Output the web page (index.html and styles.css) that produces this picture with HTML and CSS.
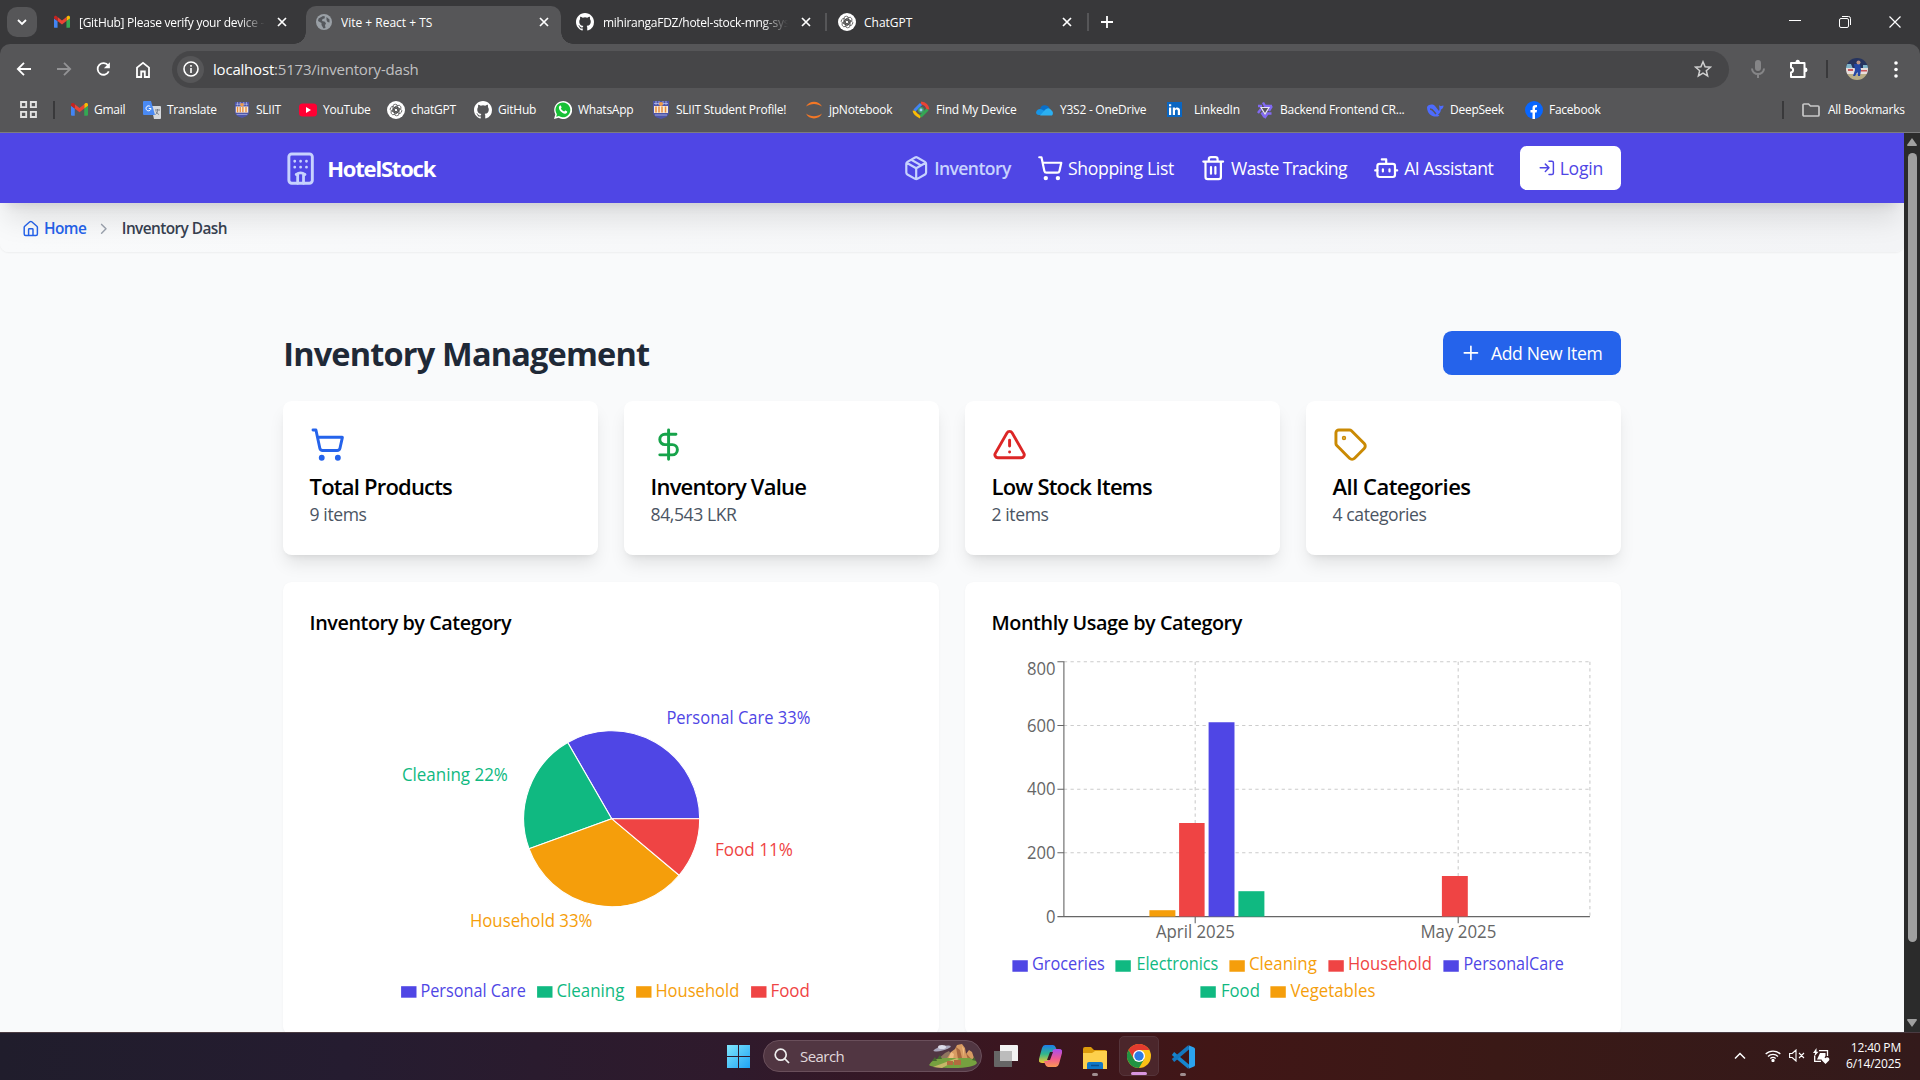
FILE: index.html
```html
<!DOCTYPE html>
<html lang="en">
<head>
<meta charset="utf-8">
<title>Vite + React + TS</title>
<link rel="stylesheet" href="styles.css">
</head>
<body>
<svg class="defs" width="0" height="0">
  <symbol id="gmail" viewBox="0 0 18 18"><path fill="#4285f4" d="M1 15.500h3V8L0 5v9.500a1 1 0 0 0 1 1z"/><path fill="#34a853" d="M14 15.500h3a1 1 0 0 0 1-1V5l-4 3z"/><path fill="#fbbc04" d="M14 3.500V8l4-3V4c0-2-1.700-2.500-3-1.500z"/><path fill="#ea4335" d="M4 8V3.500l5 3.800 5-3.800V8l-5 3.800z"/><path fill="#c5221f" d="M0 4v1l4 3V3.500L3 2.500C1.700 1.500 0 2 0 4z"/></symbol>
  <symbol id="github" viewBox="0 0 16 16"><path fill="#fff" d="M8 0C3.580 0 0 3.580 0 8c0 3.540 2.290 6.530 5.470 7.590.4.070.550-.170.550-.380 0-.190-.010-.820-.010-1.490-2.010.370-2.530-.490-2.690-.940-.090-.230-.480-.940-.820-1.130-.280-.150-.680-.520-.010-.530.630-.010 1.080.580 1.230.820.720 1.210 1.870.870 2.330.660.070-.520.280-.870.510-1.070-1.780-.2-3.640-.890-3.640-3.950 0-.870.310-1.590.820-2.150-.080-.2-.360-1.020.080-2.120 0 0 .670-.210 2.200.820a7.600 7.600 0 0 1 4 0c1.530-1.040 2.200-.820 2.200-.820.440 1.100.160 1.920.080 2.120.510.560.820 1.270.820 2.150 0 3.070-1.870 3.750-3.650 3.950.290.250.540.730.540 1.480 0 1.070-.010 1.930-.010 2.200 0 .210.150.460.550.380A8 8 0 0 0 16 8c0-4.420-3.580-8-8-8z"/></symbol>
  <symbol id="gpt" viewBox="0 0 18 18"><circle cx="9" cy="9" r="9" fill="#fff"/><g fill="none" stroke="#444" stroke-width=".7"><rect x="6" y="3.200" width="4.500" height="8.500" rx="2.200"/><rect x="6" y="3.200" width="4.500" height="8.500" rx="2.200" transform="rotate(60 9 9)"/><rect x="6" y="3.200" width="4.500" height="8.500" rx="2.200" transform="rotate(120 9 9)"/><rect x="6" y="3.200" width="4.500" height="8.500" rx="2.200" transform="rotate(180 9 9)"/><rect x="6" y="3.200" width="4.500" height="8.500" rx="2.200" transform="rotate(240 9 9)"/><rect x="6" y="3.200" width="4.500" height="8.500" rx="2.200" transform="rotate(300 9 9)"/></g></symbol>
  <symbol id="close" viewBox="0 0 10 10"><path d="M1 1l8 8M9 1L1 9" fill="none" stroke="#fff" stroke-width="1.700"/></symbol>
  <symbol id="sliit" viewBox="0 0 18 18"><path fill="#4d55a8" d="M1 0h16v11c0 4-4 6-8 7-4-1-8-3-8-7z"/><path fill="#f5ead8" d="M2 5h14v7H2z"/><path stroke="#e98b3a" stroke-width="1.500" d="M4 5.500v6M7 5.500v6M10 5.500v6M13.500 5.500v6"/><path stroke="#c3c8f0" stroke-width=".7" fill="none" d="M2 2.500h14M4 0v4M7 0v4M11 0v4M14 0v4M3 14h12"/><circle cx="9" cy="3" r="2" fill="#ef9a4a"/></symbol>
  <symbol id="cart" viewBox="0 0 24 24"><circle cx="8" cy="21" r="1"/><circle cx="19" cy="21" r="1"/><path d="M2.050 2.050h2l2.660 12.420a2 2 0 0 0 2 1.580h9.780a2 2 0 0 0 1.950-1.570l1.650-7.430H5.120"/></symbol>
</svg>

<div class="screen">
  <header class="browser">
    <div class="tabstrip">
      <button class="tab-search"><svg width="10" height="7" viewBox="0 0 10 7"><path d="M1 1l4 4 4-4" fill="none" stroke="#fff" stroke-width="1.800"/></svg></button>
      <div class="tab tab-first"><svg class="fav" width="16" height="16"><use href="#gmail"/></svg><span class="tab-title tight fade">[GitHub] Please verify your device -</span><svg class="x" width="10" height="10"><use href="#close"/></svg></div>
      <div class="tab tab-active"><svg class="fav" width="16" height="16" viewBox="0 0 16 16"><circle cx="8" cy="8" r="8" fill="#9aa0a6"/><path fill="#55585d" d="M2.500 4.500L7 2l2 .5-.5 2-2 .5-.5 2 3 .8 1 2-1 1.200.5 3-2 .5-2-3.500V9L2 7zM10.500 3l3 2.500v3l-2-.5-1-2z"/></svg><span class="tab-title">Vite + React + TS</span><svg class="x" width="10" height="10"><use href="#close"/></svg></div>
      <div class="tab tab-repo"><svg class="fav" width="18" height="18"><use href="#github"/></svg><span class="tab-title tight fade">mihirangaFDZ/hotel-stock-mng-sys</span><svg class="x" width="10" height="10"><use href="#close"/></svg></div>
      <div class="tab tab-gpt"><svg class="fav" width="18" height="18"><use href="#gpt"/></svg><span class="tab-title">ChatGPT</span><svg class="x" width="10" height="10"><use href="#close"/></svg></div>
      <svg class="plus" width="12" height="12" viewBox="0 0 12 12"><path d="M6 0v12M0 6h12" stroke="#fff" stroke-width="1.800"/></svg>
      <div class="window-buttons">
        <svg width="12" height="12" viewBox="0 0 12 12"><path d="M0 4.500h12" stroke="#fff"/></svg>
        <svg width="12" height="12" viewBox="0 0 12 12" fill="none" stroke="#fff"><rect x=".5" y="2.500" width="9" height="9" rx="1.500"/><path d="M3 .5h6.500a2 2 0 0 1 2 2V9"/></svg>
        <svg width="12" height="12" viewBox="0 0 12 12"><path d="M.5.5l11 11M11.500.5l-11 11" stroke="#fff" stroke-width="1.200"/></svg>
      </div>
    </div>

    <div class="toolbar">
      <div class="nav-buttons">
        <svg width="16" height="16" viewBox="0 0 16 16" fill="none" stroke="#fff" stroke-width="1.800"><path d="M15 8H2.500M8 1.800L1.800 8 8 14.200"/></svg>
        <svg width="16" height="16" viewBox="0 0 16 16" fill="none" stroke="#939395" stroke-width="1.800"><path d="M1 8h12.500M8 1.800L14.200 8 8 14.200"/></svg>
        <svg width="15" height="16" viewBox="0 0 16 16" fill="none" stroke="#fff" stroke-width="1.900"><path d="M13.600 10.500A6.200 6.200 0 1 1 13 4.300"/><path fill="#fff" stroke="none" d="M14.800.8v6.400H8.400z"/></svg>
        <svg width="16" height="17" viewBox="0 0 16 17" fill="none" stroke="#fff" stroke-width="1.800"><path d="M2 6.600L8 1.800l6 4.800V16H9.800v-5.500H6.200V16H2z"/></svg>
      </div>
      <div class="omnibox">
        <span class="site-info"><svg width="16" height="16" viewBox="0 0 16 16" fill="none" stroke="#fff" stroke-width="1.600"><circle cx="8" cy="8" r="7"/><path d="M8 7v5M8 4v1.700"/></svg></span>
        <span class="url"><b>localhost</b>:5173/inventory-dash</span>
        <svg class="star" width="18" height="18" viewBox="0 0 18 18"><path d="M9 1.800l2.100 5 5.300.4-4.100 3.500 1.300 5.200L9 13.100l-4.600 2.800 1.300-5.200-4.100-3.500 5.300-.4z" fill="none" stroke="#d0d0d0" stroke-width="1.500"/></svg>
      </div>
      <svg class="mic" width="16" height="18" viewBox="0 0 16 18" fill="none" stroke="#858587" stroke-width="2"><rect x="6" y="1" width="4" height="9" rx="2" fill="#858587"/><path d="M2 8.500a6 5.500 0 0 0 12 0M8 14v4"/></svg>
      <svg class="puzzle" width="20" height="20" viewBox="0 0 20 20"><path fill="none" stroke="#fff" stroke-width="2" stroke-linejoin="round" d="M3 4h13.500v14H3v-4.500c2.800-.6 2.800-4.400 0-5z"/><path fill="#fff" d="M7.500 3.500a2.200 2.800 0 0 1 4.400 0zM17 8.500a2.500 2.400 0 0 1 0 4.800z"/></svg>
      <i class="divider"></i>
      <svg class="avatar" width="22" height="22" viewBox="0 0 22 22"><clipPath id="av"><circle cx="11" cy="11" r="11"/></clipPath><g clip-path="url(#av)"><path fill="#26345f" d="M0 0h22v10H0z"/><path fill="#7fb3c8" d="M0 6h5l2 5H0zM17 7h5v4h-5z"/><path fill="#e9dfdc" d="M0 10h22v6H0z"/><path fill="#c8575c" d="M2 11h5v2H2zM15 12h6v1.500h-6z"/><path fill="#b8ad86" d="M0 16h22v6H0z"/><path fill="#2447a5" d="M8 6h6l1 6-1 6h-2l-.5-4L9 18H7l2-6z"/><circle cx="12.500" cy="4.500" r="2" fill="#bb9385"/></g></svg>
      <svg class="dots" width="4" height="17" viewBox="0 0 4 17" fill="#fff"><circle cx="2" cy="2" r="1.800"/><circle cx="2" cy="8.500" r="1.800"/><circle cx="2" cy="15" r="1.800"/></svg>
    </div>

    <div class="bookmarks">
      <svg class="apps" width="17" height="17" viewBox="0 0 17 17" fill="none" stroke="#e3e3e3" stroke-width="1.800"><path d="M1 1h5.200v5.200H1zM10.800 1H16v5.200h-5.200zM1 10.800h5.200V16H1zM10.800 10.800H16V16h-5.200z"/></svg>
      <i class="divider"></i>
      <div class="bookmark-list">
        <a><svg width="17" height="17"><use href="#gmail"/></svg>Gmail</a>
        <a><svg width="18" height="18" viewBox="0 0 18 18"><path fill="#d5d8dc" d="M8 5h9a1 1 0 0 1 1 1v11a1 1 0 0 1-1 1h-6z"/><path fill="#4a8af4" d="M1 0h7l4 14H1a1 1 0 0 1-1-1V1a1 1 0 0 1 1-1z"/><path d="M8 7.500a2.500 2.500 0 1 1-.8-2M8 7.500H5.800" fill="none" stroke="#fff"/><path d="M12 9h5M14.500 8v1.500c0 2-1 3-2 4M13 10.500c1 2 2 2.500 3 3" fill="none" stroke="#737b86"/></svg>Translate</a>
        <a><svg width="16" height="18"><use href="#sliit"/></svg>SLIIT</a>
        <a><svg width="18" height="18" viewBox="0 0 18 18"><rect y="2.500" width="18" height="13" rx="3.500" fill="#f03"/><path fill="#fff" d="M7 6l5 3-5 3z"/></svg>YouTube</a>
        <a><svg width="18" height="18"><use href="#gpt"/></svg>chatGPT</a>
        <a><svg width="18" height="18"><use href="#github"/></svg>GitHub</a>
        <a><svg width="18" height="18" viewBox="0 0 18 18"><path fill="#fff" d="M0 18l1.300-4.600A9 9 0 1 1 4.600 16.800z"/><path fill="#17c136" d="M2.200 15.800l.7-2.600a7.400 7.400 0 1 1 2 1.900z"/><path fill="#fff" d="M6.300 4.500c.6 0 .6.200 1.200 1.700.2.500-.2.800-.7 1.400.8 1.500 1.800 2.400 3.400 3 .7-.7.900-1.200 1.300-1l1.700.9c.3 1.200-1 2.300-2.200 2.200C8 12.300 5 9.500 4.900 6.800c0-1 .6-2.300 1.400-2.300z"/></svg>WhatsApp</a>
        <a><svg width="18" height="18"><use href="#sliit"/></svg>SLIIT Student Profile!</a>
        <a><svg width="18" height="18" viewBox="0 0 18 18" fill="#f37726"><path d="M1 5.500C4-1 14-1 17 5.500 12 2 6 2 1 5.500zM1 12.500c3 6.500 13 6.500 16 0-5 3.500-11 3.500-16 0z"/></svg>jpNotebook</a>
        <a><svg width="18" height="18" viewBox="0 0 18 18" fill="none" stroke-width="3"><path stroke="#fbbc04" d="M2 9.500c.5 3 3 5 6.500 6.500"/><path stroke="#ea4335" d="M9 2c4 .5 6.500 3 7 6.500"/><path stroke="#4285f4" d="M2.500 9.500L9 3"/><path stroke="#34a853" d="M8.500 15.500L15.500 8.500"/><circle cx="9" cy="9" r="2.200" fill="#a8ccf5" stroke="#3aa56b" stroke-width="1.500"/></svg>Find My Device</a>
        <a><svg width="18" height="18" viewBox="0 0 18 18"><path fill="#0a6fc9" d="M4 9a5 5 0 0 1 9.500-2L10 12z"/><path fill="#1795e6" d="M0 12a4 4 0 0 1 6-3.500L15 14H3a3 3 0 0 1-3-2z"/><path fill="#2bb0f2" d="M8 10c3-4 6-3 7-1a3.500 3.500 0 0 1 1 5.500H4z"/></svg>Y3S2 - OneDrive</a>
        <a class="wide-gap"><svg width="15" height="15" viewBox="0 0 15 15"><path fill="#0a66c2" d="M0 0h15v15H0z"/><path fill="#fff" d="M2 5.500h2.200V13H2zM2 2.200h2.200v2H2zM5.800 5.500H8v1c1-1.700 5-1.700 5 1.800V13h-2.200V9c0-2-2.800-2-2.800 0v4H5.800z"/></svg>LinkedIn</a>
        <a><svg width="18" height="18" viewBox="0 0 18 18" fill="none" stroke="#8169f3" stroke-width="2.400"><path d="M7 1.500l2 3.500h7M16 5l-3 5M15.500 12.500h-4L8.500 17M8.500 16l-3-4.500M2 12l3-4M2 5h4"/><path stroke="#e9e4ff" stroke-width="1.200" d="M5 6.500h8L9 13z"/></svg>Backend Frontend CR...</a>
        <a><svg width="18" height="18" viewBox="0 0 18 18"><path fill="#4d6bfe" d="M1 6c2-3 6-3 8-1l4 5c1-2 0-4 0-6 1 1.500 3 1 4.500.5 0 2-1 3.500-2.500 4-.5 3-1.500 4-3 5l1.500 1.200C9 17 1 15 1 6z"/><path d="M4 8c3 0 4 3 6 5" fill="none" stroke="#57585a" stroke-width="1.500"/></svg>DeepSeek</a>
        <a><svg width="18" height="18" viewBox="0 0 18 18"><circle cx="9" cy="9" r="9" fill="#0866ff"/><path fill="#fff" d="M7.500 18v-6.500h-2V9h2V7c0-2.500 1.500-3.500 4.500-3v2.200c-1.500 0-2 .2-2 1.500V9h2l-.4 2.500H10V18z"/></svg>Facebook</a>
      </div>
      <i class="divider"></i>
      <svg class="folder" width="18" height="14" viewBox="0 0 18 14"><path d="M1 2a1 1 0 0 1 1-1h4.500l2 2H16a1 1 0 0 1 1 1v8a1 1 0 0 1-1 1H2a1 1 0 0 1-1-1z" fill="none" stroke="#c7c7c7" stroke-width="1.700"/></svg>
      <span class="all">All Bookmarks</span>
    </div>
  </header>

  <div class="viewport">
    <div class="page">
      <nav class="navbar"><div class="navbar-inner">
        <div class="brand">
          <svg class="icon" width="35.200" height="35.200" viewBox="0 0 24 24"><rect width="16" height="20" x="4" y="2" rx="2"/><path d="M10 22v-6.500M14 22v-6.500M8 7h.01M12 7h.01M16 7h.01M8 11h.01M12 11h.01M16 11h.01M9 16a5 5 0 0 1 6 0" stroke-width="1.900"/></svg>
          <span>HotelStock</span>
        </div>
        <div class="links">
          <a class="current"><svg class="icon" width="26.400" height="26.400" viewBox="0 0 24 24"><path d="M11 21.730a2 2 0 0 0 2 0l7-4A2 2 0 0 0 21 16V8a2 2 0 0 0-1-1.730l-7-4a2 2 0 0 0-2 0l-7 4A2 2 0 0 0 3 8v8a2 2 0 0 0 1 1.730zM12 22V12M3.300 7L12 12l8.700-5M7.500 4.270l9 5.150"/></svg>Inventory</a>
          <a class="l-shop"><svg class="icon" width="26.400" height="26.400"><use href="#cart"/></svg>Shopping List</a>
          <a class="l-waste"><svg class="icon" width="26.400" height="26.400" viewBox="0 0 24 24"><path d="M3 6h18M19 6v14a2 2 0 0 1-2 2H7a2 2 0 0 1-2-2V6M8 6V4a2 2 0 0 1 2-2h4a2 2 0 0 1 2 2v2M10 11v6M14 11v6"/></svg>Waste Tracking</a>
          <a class="l-ai"><svg class="icon" width="26.400" height="26.400" viewBox="0 0 24 24"><path d="M12 8V4H8M2 14h2M20 14h2M15 13v2M9 13v2"/><rect width="16" height="12" x="4" y="8" rx="2"/></svg>AI Assistant</a>
          <button class="login"><svg class="icon" width="17.600" height="17.600" viewBox="0 0 24 24"><path d="M15 3h4a2 2 0 0 1 2 2v14a2 2 0 0 1-2 2h-4M10 17l5-5-5-5M15 12H3"/></svg>Login</button>
        </div>
      </div></nav>

      <div class="breadcrumb">
        <a><svg class="icon" width="17.600" height="17.600" viewBox="0 0 24 24"><path d="M15 21v-8a1 1 0 0 0-1-1h-4a1 1 0 0 0-1 1v8M3 10a2 2 0 0 1 .709-1.528l7-5.999a2 2 0 0 1 2.582 0l7 5.999A2 2 0 0 1 21 10v9a2 2 0 0 1-2 2H5a2 2 0 0 1-2-2z"/></svg><span>Home</span></a>
        <svg class="icon sep" width="17.600" height="17.600" viewBox="0 0 24 24"><path d="M9 18l6-6-6-6"/></svg>
        <span>Inventory Dash</span>
      </div>

      <main>
        <div class="heading">
          <h1>Inventory Management</h1>
          <button class="add"><svg class="icon" width="19.800" height="19.800" viewBox="0 0 24 24"><path d="M4 12h16M12 4v16"/></svg>Add New Item</button>
        </div>

        <section class="stats">
          <article class="card"><svg class="icon blue" width="35.200" height="35.200"><use href="#cart"/></svg><h2>Total Products</h2><p>9 items</p></article>
          <article class="card"><svg class="icon green" width="35.200" height="35.200" viewBox="0 0 24 24"><path d="M12 2v20M17 5H9.500a3.500 3.500 0 0 0 0 7h5a3.500 3.500 0 0 1 0 7H6"/></svg><h2>Inventory Value</h2><p>84,543 LKR</p></article>
          <article class="card"><svg class="icon red" width="35.200" height="35.200" viewBox="0 0 24 24"><path d="M21.730 18l-8-14a2 2 0 0 0-3.480 0l-8 14A2 2 0 0 0 4 21h16a2 2 0 0 0 1.730-3M12 9v4M12 17h.01"/></svg><h2>Low Stock Items</h2><p>2 items</p></article>
          <article class="card"><svg class="icon amber" width="35.200" height="35.200" viewBox="0 0 24 24"><path d="M12.586 2.586A2 2 0 0 0 11.172 2H4a2 2 0 0 0-2 2v7.172a2 2 0 0 0 .586 1.414l8.704 8.704a2.426 2.426 0 0 0 3.420 0l6.580-6.580a2.426 2.426 0 0 0 0-3.420z"/><circle cx="7.500" cy="7.500" r=".5" fill="currentColor"/></svg><h2 class="roomy">All Categories</h2><p>4 categories</p></article>
        </section>

        <section class="charts">
          <article class="card">
            <h3>Inventory by Category</h3>
            <svg class="chart" viewBox="309.600 656.800 602.800 352">
              <g stroke="#fff" stroke-width="1.100">
                <path class="f-indigo" d="M611.300 818.500H699.300A88 88 0 0 0 567.300 742.290z"/>
                <path class="f-green" d="M611.300 818.500L567.300 742.290A88 88 0 0 0 528.610 848.600z"/>
                <path class="f-amber" d="M611.300 818.500L528.610 848.600A88 88 0 0 0 678.710 875.070z"/>
                <path class="f-red" d="M611.300 818.500L678.710 875.070A88 88 0 0 0 699.300 818.500z"/>
              </g>
              <text class="f-indigo" x="666" y="724" textLength="144" lengthAdjust="spacingAndGlyphs">Personal Care 33%</text>
              <text class="f-green" x="401.500" y="781" textLength="106" lengthAdjust="spacingAndGlyphs">Cleaning 22%</text>
              <text class="f-red" x="714.500" y="856" textLength="78" lengthAdjust="spacingAndGlyphs">Food 11%</text>
              <text class="f-amber" x="469.500" y="927" textLength="122.500" lengthAdjust="spacingAndGlyphs">Household 33%</text>
              <path class="f-indigo" d="M400.700 986h15.400v11.500h-15.400z"/><text class="f-indigo" x="420" y="997" textLength="105.500" lengthAdjust="spacingAndGlyphs">Personal Care</text>
              <path class="f-green" d="M536.700 986h15.400v11.500h-15.400z"/><text class="f-green" x="556" y="997" textLength="68" lengthAdjust="spacingAndGlyphs">Cleaning</text>
              <path class="f-amber" d="M635.700 986h15.400v11.500h-15.400z"/><text class="f-amber" x="655" y="997" textLength="84" lengthAdjust="spacingAndGlyphs">Household</text>
              <path class="f-red" d="M750.700 986h15.400v11.500h-15.400z"/><text class="f-red" x="770" y="997" textLength="39.500" lengthAdjust="spacingAndGlyphs">Food</text>
            </svg>
          </article>
          <article class="card">
            <h3>Monthly Usage by Category</h3>
            <svg class="chart" viewBox="991.600 656.800 602.800 352">
              <path fill="none" stroke="#ccc" stroke-width="1.100" stroke-dasharray="3.300 3.300" d="M1063.500 661.500h526M1063.500 725.300h526M1063.500 789h526M1063.500 852.600h526M1194.800 661.500v255M1457.800 661.500v255M1589.500 661.500v255"/>
              <path fill="none" stroke="#666" stroke-width="1.100" d="M1057 661.500h6.500V916.400M1057 725.300h6.500M1057 789h6.500M1057 852.600h6.500M1057 916.400H1589.500M1194.800 916.400v6.600M1457.800 916.400v6.600"/>
              <path class="f-amber" d="M1149 910h26v6.400h-26z"/><path class="f-red" d="M1178.700 822.800h25.500v93.600h-25.500zM1441.500 875.800h25.900v40.600h-25.900z"/><path class="f-indigo" d="M1208.200 722h25.900v194.400h-25.900z"/><path class="f-green" d="M1238 891h26v25.400h-26z"/>
              <g class="f-axis">
                <text x="1026.500" y="674.500" textLength="28.500" lengthAdjust="spacingAndGlyphs">800</text>
                <text x="1026.500" y="731.500" textLength="28.500" lengthAdjust="spacingAndGlyphs">600</text>
                <text x="1026.500" y="794.500" textLength="28.500" lengthAdjust="spacingAndGlyphs">400</text>
                <text x="1026.500" y="858.500" textLength="28.500" lengthAdjust="spacingAndGlyphs">200</text>
                <text x="1045.500" y="922.500" textLength="9.500" lengthAdjust="spacingAndGlyphs">0</text>
                <text x="1155.500" y="938" textLength="79" lengthAdjust="spacingAndGlyphs">April 2025</text>
                <text x="1420" y="938" textLength="76" lengthAdjust="spacingAndGlyphs">May 2025</text>
              </g>
              <path class="f-indigo" d="M1012 960h15.400v11.500H1012zM1443 960h15.400v11.500H1443z"/>
              <path class="f-green" d="M1115 960h15.400v11.500H1115zM1200 986h15.400v11.500H1200z"/>
              <path class="f-amber" d="M1229 960h15.400v11.500H1229zM1270 986h15.400v11.500H1270z"/>
              <path class="f-red" d="M1328 960h15.400v11.500H1328z"/>
              <text class="f-indigo" x="1031.500" y="970" textLength="73" lengthAdjust="spacingAndGlyphs">Groceries</text>
              <text class="f-green" x="1136" y="970" textLength="82" lengthAdjust="spacingAndGlyphs">Electronics</text>
              <text class="f-amber" x="1248.500" y="970" textLength="68" lengthAdjust="spacingAndGlyphs">Cleaning</text>
              <text class="f-red" x="1347.500" y="970" textLength="84" lengthAdjust="spacingAndGlyphs">Household</text>
              <text class="f-indigo" x="1463" y="970" textLength="100.500" lengthAdjust="spacingAndGlyphs">PersonalCare</text>
              <text class="f-green" x="1220.500" y="997" textLength="39" lengthAdjust="spacingAndGlyphs">Food</text>
              <text class="f-amber" x="1290" y="997" textLength="85" lengthAdjust="spacingAndGlyphs">Vegetables</text>
            </svg>
          </article>
        </section>
      </main>
    </div>
    <div class="scrollbar">
      <svg width="10" height="8" viewBox="0 0 10 8"><path fill="#a0a0a0" d="M5 0l5 7q0 1-1 1H1Q0 8 0 7z"/></svg>
      <i class="thumb"></i>
      <svg width="10" height="8" viewBox="0 0 10 8"><path fill="#a0a0a0" d="M5 8L0 1q0-1 1-1h8q1 0 1 1z"/></svg>
    </div>
  </div>

  <footer class="taskbar">
    <div class="task-apps">
      <svg width="23" height="23" viewBox="0 0 23 23"><linearGradient id="win" x2="1" y2="1" gradientUnits="objectBoundingBox"><stop stop-color="#7fe6fc"/><stop offset="1" stop-color="#1fa4f5"/></linearGradient><path fill="url(#win)" d="M0 0h11v11H0zM12 0h11v11H12zM0 12h11v11H0zM12 12h11v11H12z"/></svg>
      <div class="search">
        <svg width="16" height="16" viewBox="0 0 16 16" fill="none" stroke="#eee" stroke-width="1.700"><circle cx="6.700" cy="6.700" r="5.500"/><path d="M10.700 10.700L15 15"/></svg>
        <span>Search</span>
        <svg class="scene" width="48" height="24" viewBox="0 0 48 24"><path fill="#8f765f" d="M8 16l8-7 4-2 3 5 4 4z"/><path fill="#d79b62" d="M17 16l5-8 4-3 2-4 5-1 3 4 1 6 3-4 3 2 3 9z"/><path fill="#a8683f" d="M27 3l2 12 4-1-2-8zM37 9l2 7h4z"/><path fill="#f0bd83" d="M22 8l3 2-1 6h-5zM33 2l2 3v8z"/><path fill="#76a13f" d="M0 21q4-8 18-7l22 0q7 1 8 5-3 5-24 5T0 21z"/><path fill="#c7b768" d="M4 23l24-9 2 1-17 9z"/><path fill="#45682e" d="M3 17l3-4 2 4zM8 15l3-4 2 4zM43 16l2-3 2 4z"/><path fill="#b26c3f" d="M18 17h6v4h-6zM25 16h7v5h-7z"/><ellipse cx="13" cy="4.500" rx="9" ry="2" fill="#a9a6bb" transform="rotate(-15 13 4)"/><ellipse cx="13" cy="3" rx="4" ry="2" fill="#dcdce9"/></svg>
      </div>
      <svg class="taskview" width="24" height="22" viewBox="0 0 24 22"><path fill="#f2f2f2" d="M6 0h17a1 1 0 0 1 1 1v15H6z"/><path fill="#666" d="M0 6h18v16H1q-1 0-1-1z"/><path fill="#bcbcbc" d="M6 6h12v10H6z"/></svg>
      <svg class="copilot" width="23" height="22" viewBox="0 0 23 22"><linearGradient id="c1" x2="0" y2="1"><stop stop-color="#1d7de8"/><stop offset=".5" stop-color="#30b78c"/><stop offset="1" stop-color="#f8c82d"/></linearGradient><linearGradient id="c2" x2="0" y2="1"><stop stop-color="#a94df0"/><stop offset=".55" stop-color="#f15b8f"/><stop offset="1" stop-color="#fb9953"/></linearGradient><path fill="url(#c1)" d="M6 0h8q2 0 3 3l1 3h-3q-2 0-3 3l-2 6q-1 3-3 3H3q-4 0-3-4L3 3q1-3 3-3z"/><path fill="url(#c2)" d="M17 22H9q-2 0-3-3l-1-3h3q2 0 3-3l2-6q1-3 3-3h4q4 0 3 4l-3 11q-1 3-3 3z"/><path fill="#391723" d="M11 7h3l-3 8H8z"/></svg>
      <div class="app"><svg width="24" height="22" viewBox="0 0 24 22"><path fill="#dc9b0b" d="M0 2q0-2 2-2h6l3 3h11q2 0 2 2v4H0z"/><path fill="#fdd04c" d="M0 6h9l3-2h12v18H0z"/><path fill="#1077c7" d="M4 22v-5q0-2 2-2h12q2 0 2 2v5z"/><path stroke="#0a4f8f" stroke-width="1.500" d="M8 18.500h8"/></svg><i class="dot"></i></div>
      <div class="app app-active"><svg width="24" height="24" viewBox="0 0 24 24"><circle cx="12" cy="12" r="12" fill="#fbc116"/><path fill="#e33b2e" d="M1.600 6A12 12 0 0 1 22.400 6H12L6.800 15z"/><path fill="#229342" d="M1.600 6A12 12 0 0 0 12 24l5.200-9H6.800z"/><circle cx="12" cy="12" r="6" fill="#fff"/><circle cx="12" cy="12" r="4.700" fill="#2c7be5"/></svg><i class="dot"></i></div>
      <div class="app"><svg width="24" height="24" viewBox="0 0 24 24"><path fill="none" stroke="#1686cf" stroke-width="3.600" stroke-linejoin="round" d="M18 22L2 8.500"/><path fill="none" stroke="#1478c0" stroke-width="3.600" d="M18 2L2 15.500"/><path fill="#2ba3ef" d="M17 0l6 2.500q1 .5 1 1.500v16q0 1-1 1.500L17 24q1-.5 1-2V2q0-1.500-1-2z"/></svg><i class="dot"></i></div>
    </div>
    <div class="tray">
      <svg width="12" height="8" viewBox="0 0 12 8"><path d="M1 6.500l5-5 5 5" fill="none" stroke="#fff" stroke-width="1.500"/></svg>
      <svg class="wifi" width="16" height="13" viewBox="0 0 16 13" fill="none" stroke="#fff" stroke-width="1.300"><path d="M.7 5a10.500 10.500 0 0 1 14.600 0M3 7.500a7 7 0 0 1 10 0M5.300 9.600a4 4 0 0 1 5.400 0"/><circle cx="8" cy="11.500" r="1" fill="#fff"/></svg>
      <svg class="vol" width="16" height="13" viewBox="0 0 16 13" fill="none" stroke="#fff" stroke-width="1.100"><path d="M.6 4.500h2.600L7 1v11L3.200 8.500H.6zM10 4l5 5M15 4l-5 5"/></svg>
      <svg class="battery" width="17" height="16" viewBox="0 0 17 16"><path d="M6 2.700h8.500V8M1.700 8v5.300H8" stroke="#fff" stroke-width="1.300" fill="none"/><path fill="#fff" d="M7 5h5.500v3L10 11.500H4zM3.500 0L0 5h2.200L1 9l4.500-5.200H3.500zM12.500 16L9 12.500c-1.500-2.200 2-4.500 3.500-2.300 1.500-2.200 5 .1 3.500 2.300z"/></svg>
      <div class="clock">12:40 PM<br>6/14/2025</div>
    </div>
  </footer>
</div>
</body>
</html>
```
FILE: styles.css
```css
* { box-sizing: border-box; }
body { margin: 0; font-family: "Open Sans", "Noto Sans", sans-serif; overflow: hidden; }
h1, h2, h3, p { margin: 0; }
button { font: inherit; border: 0; padding: 0; }
svg { display: block; flex: none; }
.defs { position: absolute; }
.screen { width: 1920px; height: 1080px; display: flex; flex-direction: column; background: #38383a; }

/* Browser chrome */
.browser { flex: none; height: 133px; color: #fff; font-size: 12px; }
.tabstrip { height: 44px; display: flex; align-items: center; padding: 0 19px 0 7px; }
.tab-search { width: 30px; height: 30px; border-radius: 10px; background: #565658; display: grid; place-items: center; margin-right: 17px; }
.tab { display: flex; align-items: center; height: 38px; }
.tab .fav { margin-right: 9px; }
.tab-title { flex: 1; min-width: 0; white-space: nowrap; overflow: hidden; }
.tight { letter-spacing: -.27px; }
.fade { mask-image: linear-gradient(90deg, #000 calc(100% - 26px), transparent); -webkit-mask-image: linear-gradient(90deg, #000 calc(100% - 26px), transparent); }
.tab-first { width: 252px; padding-right: 19px; }
.tab-first .tab-title { margin-right: 12px; }
.tab-active { width: 255px; background: #565658; border-radius: 10px 10px 0 0; padding: 0 12px 6px 10px; align-self: flex-end; position: relative; }
.tab-active::before, .tab-active::after { content: ""; position: absolute; bottom: 0; width: 12px; height: 12px; }
.tab-active::before { left: -12px; background: radial-gradient(circle at 0 0, transparent 11.5px, #565658 12px); }
.tab-active::after { right: -12px; background: radial-gradient(circle at 100% 0, transparent 11.5px, #565658 12px); }
.tab-repo { width: 266px; height: 18px; padding: 0 14px 0 15px; border-right: 2px solid #565658; }
.tab-repo .tab-title { margin-right: 13px; }
.tab-gpt { width: 262px; height: 18px; padding: 0 15px 0 11px; border-right: 2px solid #565658; }
.tab-gpt .fav { margin-right: 8px; }
.plus { margin-left: 12px; }
.window-buttons { margin-left: auto; display: flex; gap: 38px; }

.toolbar { height: 50px; background: #565658; border-radius: 10px 10px 0 0; display: flex; align-items: center; padding-left: 16px; }
.nav-buttons { display: flex; align-items: center; gap: 24px; width: 156px; }
.omnibox { width: 1557px; height: 37px; border-radius: 19px; background: #464648; display: flex; align-items: center; padding: 0 17px 0 5px; }
.site-info { width: 27px; height: 27px; border-radius: 50%; background: #565658; display: grid; place-items: center; }
.url { margin-left: 9px; flex: 1; font-size: 15px; letter-spacing: -.2px; color: #c0c0c2; }
.url b { font-weight: 400; color: #fff; }
.mic { margin-left: 21px; }
.puzzle { margin-left: 22px; }
.divider { width: 2px; height: 18px; background: #39393b; flex: none; }
.toolbar .divider { margin: 0 18px; }
.dots { margin-left: 26px; }
.bookmarks { height: 39px; background: #565658; border-bottom: 1px solid #7c7c7e; display: flex; align-items: center; padding: 0 15px 7px 20px; letter-spacing: -.25px; }
.apps { margin-right: 16px; }
.bookmark-list { margin-left: 16px; width: 1711px; display: grid; grid-template-columns: 72px 91px 65px 88px 87px 80px 98px 153px 107px 124px 131px 89px 170px 99px 100px; }
.bookmark-list a { display: flex; align-items: center; gap: 6px; white-space: nowrap; }
.bookmark-list .wide-gap { gap: 12px; }
.folder { margin: 0 8px 0 18px; }
.all { white-space: nowrap; }

/* Page */
.viewport { height: 899px; display: flex; overflow: hidden; }
.page { width: 1904px; background: #f9fafb; overflow: hidden; font-size: 17.6px; line-height: 26.4px; }
.icon { fill: none; stroke: currentColor; stroke-width: 2; stroke-linecap: round; stroke-linejoin: round; }
.navbar { position: relative; z-index: 1; height: 70.4px; background: #4f46e5; color: #fff; box-shadow: 0 22px 27.5px -5.5px rgba(0,0,0,.1), 0 8.8px 11px -6.6px rgba(0,0,0,.1); }
.navbar-inner { width: 1337.6px; height: 100%; margin: 0 auto; display: flex; align-items: center; justify-content: space-between; }
.brand { display: flex; align-items: center; gap: 8.8px; font-size: 22px; font-weight: 700; letter-spacing: -1.2px; }
.brand svg { color: #c7d2fe; }
.links { display: flex; align-items: center; gap: 26.4px; }
.links a { display: flex; align-items: center; gap: 4.4px; white-space: nowrap; }
.links .current { color: #c7d2fe; font-weight: 600; letter-spacing: -.6px; }
.l-shop { letter-spacing: -.32px; }
.l-waste { letter-spacing: -.6px; }
.l-ai { letter-spacing: -.43px; }
.login { width: 101px; height: 44px; border-radius: 6.6px; background: #fff; color: #4f46e5; display: flex; align-items: center; justify-content: center; gap: 4.4px; letter-spacing: -.25px; }
.breadcrumb { height: 49px; display: flex; align-items: center; padding: 2px 22px 0; background: linear-gradient(90deg, #f9fafb, #f3f4f6); border-radius: 0 0 8.8px 8.8px; box-shadow: 0 1px 2px rgba(0,0,0,.05); font-size: 15.4px; font-weight: 600; color: #374151; letter-spacing: -.58px; }
.breadcrumb a { display: flex; align-items: center; gap: 4.4px; color: #2563eb; }
.breadcrumb .sep { margin: 0 9px; color: #9ca3af; }
main { width: 1337.6px; margin: 78.6px auto 0; }
.heading { display: flex; justify-content: space-between; align-items: center; height: 44px; margin-bottom: 26px; }
h1 { font-size: 32.5px; line-height: 40px; font-weight: 700; color: #1f2937; letter-spacing: -.82px; padding-top: 2px; }
.add { width: 178px; height: 44px; border-radius: 8.8px; background: #2563eb; color: #fff; display: flex; align-items: center; justify-content: center; gap: 10px; letter-spacing: -.36px; }
.card { min-width: 0; background: #fff; border-radius: 8.8px; padding: 26.4px; box-shadow: 0 11px 16.5px -3.3px rgba(0,0,0,.1), 0 4.4px 6.6px -4.4px rgba(0,0,0,.1); }
.stats { display: grid; grid-template-columns: repeat(4, 1fr); gap: 26.4px; margin-bottom: 27px; }
.stats .card { height: 154px; }
.stats h2 { margin-top: 8.8px; font-size: 22px; line-height: 30.8px; font-weight: 600; letter-spacing: -.8px; }
.stats .roomy { letter-spacing: -.52px; }
.stats p { color: #4b5563; line-height: 25px; letter-spacing: -.43px; }
.blue { color: #2563eb; }
.green { color: #16a34a; }
.red { color: #dc2626; }
.amber { color: #ca8a04; }
.charts { display: grid; grid-template-columns: repeat(2, 1fr); gap: 26.4px; }
.charts .card { box-shadow: 0 1px 3px rgba(0,0,0,.04); }
.charts h3 { font-size: 19.8px; line-height: 30.8px; font-weight: 600; letter-spacing: -.44px; margin-bottom: 17.6px; }
.chart { width: 602.8px; height: 352px; font-size: 17.6px; }
.f-indigo { fill: #4f46e5; }
.f-green { fill: #10b981; }
.f-amber { fill: #f59e0b; }
.f-red { fill: #ef4444; }
.f-axis { fill: #666; }
.scrollbar { width: 16px; background: #2b2b2b; display: flex; flex-direction: column; align-items: center; padding: 5px 0; }
.thumb { width: 9px; height: 789px; margin: 7px 0 auto; border-radius: 5px; background: #a0a0a0; }

/* Taskbar */
.taskbar { height: 48px; display: flex; align-items: center; border-top: 1px solid #4a3b42; background: linear-gradient(90deg, #201d2c 0, #251c30 18%, #2f1a2c 38%, #3a1620 52%, #411616 63%, #3a1916 78%, #331a1b 100%); color: #fff; }
.task-apps { display: flex; align-items: center; margin-left: 727px; height: 100%; padding-bottom: 1px; }
.search { width: 219px; height: 32px; margin-left: 13px; border-radius: 16px; border: 1px solid #6a4f5b; background: #513642; display: flex; align-items: center; padding: 0 4px 0 10px; font-size: 15px; letter-spacing: -.55px; color: #e0d8dc; }
.search span { margin-left: 10px; flex: 1; }
.taskview { margin-left: 12px; }
.copilot { margin: 0 9px 0 21px; }
.app { width: 40px; height: 40px; margin-left: 4px; display: flex; flex-direction: column; align-items: center; justify-content: flex-end; border-radius: 5px; }
.app svg { margin-bottom: 4px; }
.app-active { background: #4b262b; border: 1px solid #55343a; }
.dot { width: 6px; height: 3px; border-radius: 2px; background: #a08e90; }
.app-active .dot { width: 16px; background: #d896e0; }
.tray { display: flex; align-items: center; margin-left: auto; padding: 0 19px 2px 0; }
.wifi { margin-left: 19px; }
.vol { margin-left: 8px; }
.battery { margin-left: 8px; }
.clock { width: 71px; text-align: right; font-size: 12px; line-height: 16px; letter-spacing: -.2px; }
```
